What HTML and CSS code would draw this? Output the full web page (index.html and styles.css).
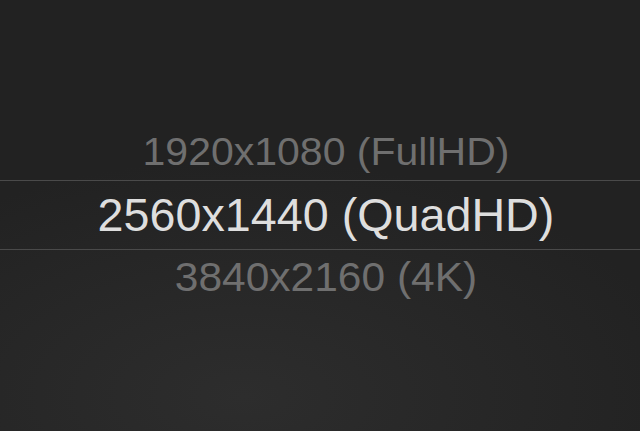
FILE: index.html
```html
<!DOCTYPE html>
<html lang="en">
  <head>
    <meta charset="UTF-8" />
    <meta name="viewport" content="width=device-width, initial-scale=1.0" />
    <link rel="stylesheet" href="styles.css">
  </head>
  <body>
    <div class="picker">
      <div class="option side">1920x1080 (FullHD)</div>
      <div class="option selected">2560x1440 (QuadHD)</div>
      <div class="option side last">3840x2160 (4K)</div>
    </div>
  </body>
</html>
```

FILE: styles.css
```css
html,
body {
  margin: 0;
  height: 100%;
}
body {
  background-color: #222222;
  background-image: radial-gradient(ellipse 70% 55% at 38% 92%, #2d2d2d, #222222);
  font-family: "Liberation Sans", Arial, sans-serif;
  overflow: hidden;
}
.picker {
  display: flex;
  flex-direction: column;
  padding-top: 125px;
}
.option {
  text-align: center;
  white-space: nowrap;
  padding-left: 12px;
}
.side {
  color: #6f6f6f;
  font-size: 41px;
  height: 55px;
  line-height: 55px;
  transform: scaleY(0.95);
}
.side.last {
  font-size: 42.5px;
}
.selected {
  color: #dedede;
  font-size: 46.7px;
  height: 68px;
  line-height: 68px;
  border-top: 1px solid #4a4a4a;
  border-bottom: 1px solid #4a4a4a;
}
```
